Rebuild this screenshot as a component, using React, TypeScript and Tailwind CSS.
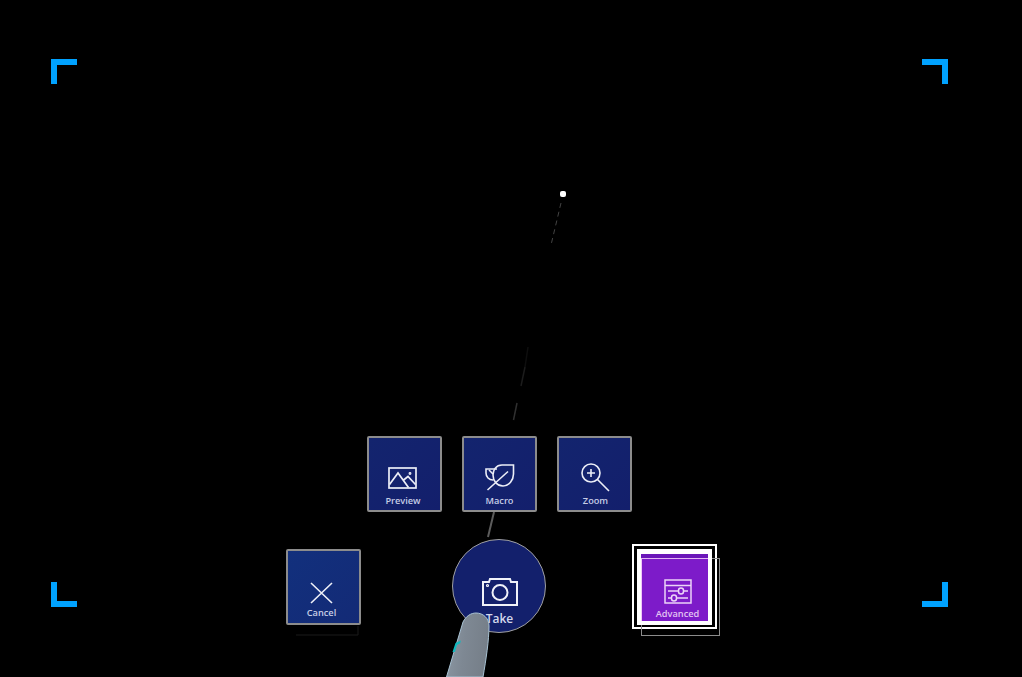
import React from "react";

const font = { fontFamily: '"Open Sans", "Noto Sans", sans-serif' };

function Corner({ cls }: { cls: string }) {
  return <div className={`w-[26px] h-[25px] border-[#00a2ff] ${cls}`} />;
}

function Tile({ label, bg, icon, iconBox, labelCls, shift }: { label: string; bg: string; icon: React.ReactNode; iconBox: string; labelCls: string; shift: string }) {
  return (
    <div className={`w-[75px] h-[76px] shrink-0 rounded-[2px] border-2 border-[#8c8c8c] flex flex-col items-center justify-end ${bg}`}>
      <div className={`flex flex-col items-center ${shift}`}>
        <div className={iconBox}>{icon}</div>
        <div className={`text-[9.2px] leading-[13px] font-semibold text-[#c6cde6] ${labelCls}`}>{label}</div>
      </div>
    </div>
  );
}

const PreviewIcon = (
  <svg width="30" height="23" viewBox="0 0 30 23" fill="none" stroke="#eceef7" strokeWidth="1.700">
    <rect x="1" y="1" width="27" height="20" />
    <path d="M1.500 17.500 L10 6 L20.500 20.500 M15 13.500 L20 9.500 L27.500 17.500" />
    <circle cx="22" cy="6.500" r="0.600" />
  </svg>
);
const MacroIcon = (
  <svg width="30" height="27" viewBox="0 0 30 27" fill="none" stroke="#eceef7" strokeWidth="1.600">
    <path d="M12 5 H1 V9 C1 13 4 16 8 16" />
    <path d="M28.500 1 H17 C11 1 8 6 8 11 C8 17 12 22 18 22 C24 22 28.500 16 28.500 10 Z" />
    <path d="M2.500 26 L23 7.500" />
    <path d="M4 6 L8 10" />
  </svg>
);
const ZoomIcon = (
  <svg width="30" height="30" viewBox="0 0 30 30" fill="none" stroke="#eceef7" strokeWidth="1.600">
    <circle cx="10" cy="10" r="9" />
    <path d="M6 10 H14 M10 6 V14 M16.500 16.500 L28 28" />
  </svg>
);
const CancelIcon = (
  <svg width="23" height="22" viewBox="0 0 23 22" fill="none" stroke="#eef0f8" strokeWidth="1.600">
    <path d="M1 1 L22 21 M22 1 L1 21" />
  </svg>
);
const AdvancedIcon = (
  <svg width="28" height="25" viewBox="0 0 28 25" fill="none" stroke="#ecd4f7" strokeWidth="1.500">
    <rect x="1" y="1" width="26" height="23" />
    <path d="M1 6.500 H27 M4 12 H14.500 M20 12 H24 M4 19 H7.500 M13 19 H24" />
    <rect x="14.500" y="9" width="5" height="6" rx="2.500" />
    <rect x="7.500" y="16" width="5" height="6" rx="2.500" />
  </svg>
);

export default function App() {
  const top = "bg-gradient-to-br from-[#13246e] to-[#131f6c]";
  return (
    <div style={font} className="relative w-[1022px] h-[677px] overflow-hidden bg-black">
      <div className="absolute left-[51px] right-[74px] top-[59px] flex justify-between h-[25px]">
        <Corner cls="border-t-[6px] border-l-[6px]" />
        <Corner cls="border-t-[6px] border-r-[6px]" />
      </div>
      <div className="absolute left-[51px] right-[74px] top-[582px] flex justify-between h-[25px]">
        <Corner cls="border-b-[6px] border-l-[6px]" />
        <Corner cls="border-b-[6px] border-r-[6px]" />
      </div>

      <svg className="absolute inset-0" width="1022" height="677" fill="none">
        <path d="M561 203 L551 245" stroke="#444444" strokeWidth="1" strokeDasharray="5 4" />
        <path d="M528 347 L525 367" stroke="#0e0e0e" strokeWidth="1.500" />
        <path d="M525 367 L521 386" stroke="#1c1c1c" strokeWidth="1.500" />
        <path d="M517 403 L513.500 420" stroke="#303030" strokeWidth="1.500" />
        <path d="M494 512 L488 537" stroke="#5c5c5c" strokeWidth="2" />
        <path d="M296 635 H358 V626" stroke="#1a1a1a" strokeWidth="1" />
      </svg>
      <div className="absolute left-[559.500px] top-[191px] w-[6px] h-[6px] rounded-[2px] bg-white" />

      <div className="relative flex flex-col pt-[436px]">
        <div className="flex gap-[20px] pl-[367px]">
          <Tile label="Preview" bg={top} shift="mr-[3px]" icon={PreviewIcon} iconBox="mb-[4px]" labelCls="mb-[3px]" />
          <Tile label="Macro" bg={top} shift="" icon={MacroIcon} iconBox="mb-[3px]" labelCls="mb-[3px]" />
          <Tile label="Zoom" bg={top} shift="ml-[2px]" icon={ZoomIcon} iconBox="mb-[1px]" labelCls="mb-[3px]" />
        </div>

        <div className="flex items-start mt-[27px] pl-[286px]">
          <div className="mt-[10px]">
            <Tile label="Cancel" bg="bg-gradient-to-br from-[#12307d] to-[#132a76]" shift="mr-[4px]" icon={CancelIcon} iconBox="mb-[2px]" labelCls="mb-[4px]" />
          </div>

          <div className="ml-[91px] w-[94px] h-[94px] rounded-full border border-[#a0a0a0] bg-[#13206c] flex flex-col items-center justify-start pt-[37px]">
            <svg width="36" height="29" viewBox="0 0 36 29" fill="none" stroke="#f0f2f9" strokeWidth="2" className="-mr-[1px]">
              <path d="M1 5 H7 L8 2 H28 L29 5 H35 V28 H1 Z" />
              <circle cx="18" cy="15.500" r="7.500" />
              <circle cx="5.500" cy="8.500" r="0.600" />
            </svg>
            <div className="ml-[1px] mt-[5px] text-[12px] leading-[16px] font-semibold text-[#d3d8ec]">Take</div>
          </div>

          <div className="relative ml-[86px] mt-[5px] w-[85px] h-[85px] shrink-0 border-2 border-white p-[3px] pb-[2px]">
            <div className="absolute left-[7px] top-[12px] w-[79px] h-[78px] border border-[#8c8c8c]" />
            <div className="relative w-full h-full border-[4px] border-t-[5px] border-white bg-[#7d1bc9] flex flex-col items-center justify-end">
              <div className="absolute inset-x-0 top-0 h-[5px] bg-[#6a16b8] border-b border-[#e3b6f4]" />
              <div className="absolute left-0 top-[5px] bottom-0 w-[1px] bg-[#f0c8f8]" />
              <div className="ml-[6px] mb-[3px]">{AdvancedIcon}</div>
              <div className="ml-[6px] mb-[1px] text-[9.200px] leading-[13px] font-semibold text-[#e2c4f2]">Advanced</div>
            </div>
          </div>
        </div>
      </div>

      <svg className="absolute inset-0" width="1022" height="677" fill="none">
        <defs>
          <linearGradient id="finger" x1="0" y1="0" x2="1" y2="0.200">
            <stop offset="0" stopColor="#8d99a5" />
            <stop offset="0.500" stopColor="#7e8893" />
            <stop offset="1" stopColor="#767f89" />
          </linearGradient>
        </defs>
        <path d="M446.500 677 L463 622 C466 616 471 613 476 613 C483 613 489 618 489 626 C489 640 486 660 483 677 Z" fill="url(#finger)" stroke="#a9c3d4" strokeWidth="1" />
        <path d="M452.500 652 L455.500 643 L461 640.500 L460 643.500 L457 645 L455 652 Z" fill="#12b8bd" />
      </svg>
    </div>
  );
}
